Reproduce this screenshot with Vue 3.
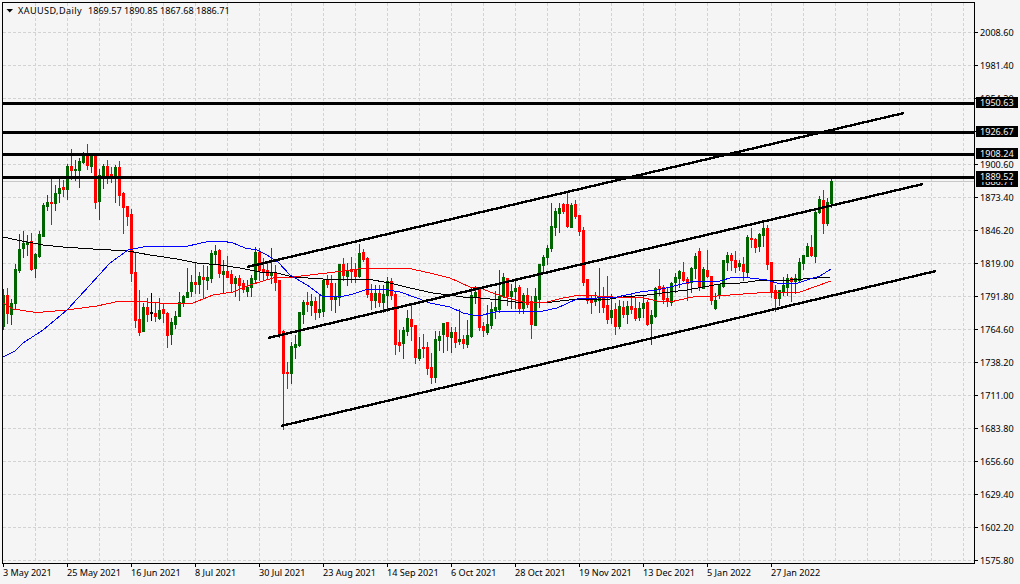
<template>
  <div class="terminal">
    <svg class="chart" width="1020" height="584" viewBox="0 0 1020 584">
      <!-- grid -->
      <g class="grid">
        <line v-for="x in gridX" :key="'gx' + x" :x1="x + 0.5" y1="3" :x2="x + 0.5" y2="563" />
        <line v-for="p in prices" :key="'gy' + p.y" x1="3" :y1="p.y + 0.5" x2="974" :y2="p.y + 0.5" />
      </g>

      <line class="bid" x1="3" y1="181.5" x2="974" y2="181.5" />

      <!-- candles -->
      <g v-for="c in candles" :key="c.col" :class="c.type">
        <rect class="wick" :x="c.col" :y="c.high" width="1" :height="c.low - c.high + 1" />
        <rect class="wick" :x="c.col - 1" :y="c.top" width="3" :height="c.bot - c.top + 1" />
      </g>

      <!-- moving averages -->
      <polyline class="ma ma-black" :points="maBlack" />
      <polyline class="ma ma-red" :points="maRed" />
      <polyline class="ma ma-blue" :points="maBlue" />

      <!-- channel -->
      <line v-for="t in channel" :key="t.x1" class="trend" :x1="t.x1" :y1="t.y1" :x2="t.x2" :y2="t.y2" />

      <!-- horizontal levels -->
      <rect v-for="l in levels" :key="l.label" x="3" :y="l.y - 1" width="971" height="3" />

      <rect class="frame" x="2.5" y="2.5" width="972" height="561" />

      <!-- axes -->
      <g v-for="p in prices" :key="'py' + p.y">
        <rect :x="975" :y="p.y" width="3" height="1" />
        <text class="axis" x="980" :y="p.y + 4">{{ p.label }}</text>
      </g>
      <g v-for="d in dates" :key="d.label">
        <rect :x="d.x" y="564" width="1" height="3" />
        <text class="axis" :x="d.x" y="576">{{ d.label }}</text>
      </g>

      <!-- price tags -->
      <g>
        <rect x="976" y="176" width="42" height="11" />
        <text class="tag" x="980" y="185">1886.71</text>
      </g>
      <g v-for="l in levels" :key="'tag' + l.label">
        <rect x="976" :y="l.y - 6" width="42" height="11" />
        <text class="tag" x="980" :y="l.y + 3">{{ l.label }}</text>
      </g>

      <!-- header -->
      <polygon points="6.5,9 13,9 9.75,12.5" />
      <text class="title" x="18" y="14">XAUUSD,Daily</text>
      <text class="axis" x="88" y="14">1869.57</text>
      <text class="axis" x="124" y="14">1890.85</text>
      <text class="axis" x="160" y="14">1867.68</text>
      <text class="axis" x="196" y="14">1886.71</text>
    </svg>
  </div>
</template>

<script setup>
// wickTop, bodyTop, bodyBottom, wickBottom, colour (one row per day, 4px apart)
const raw = [
  [289,295,326,329,'g'],[288,295,313,323,'r'],[299,303,314,324,'g'],[264,269,303,308,'g'],
  [234,249,270,272,'g'],[231,243,248,257,'g'],[235,242,244,255,'g'],[233,241,269,270,'r'],
  [253,254,268,277,'g'],[231,234,256,257,'g'],[203,205,236,236,'g'],[195,202,206,210,'g'],
  [177,202,203,224,'r'],[185,193,203,210,'g'],[178,188,193,202,'g'],[180,187,189,196,'r'],
  [164,166,189,199,'g'],[149,166,170,179,'r'],[160,169,170,180,'g'],[158,161,170,187,'g'],
  [152,153,162,163,'g'],[144,154,165,169,'r'],[153,155,166,172,'g'],[153,155,202,208,'r'],
  [169,175,201,219,'g'],[164,166,178,188,'g'],[160,166,175,183,'r'],[167,174,178,182,'r'],
  [165,167,178,202,'g'],[161,167,195,205,'r'],[192,193,207,233,'r'],[206,206,216,225,'r'],
  [209,214,273,281,'r'],[252,272,320,327,'r'],[290,319,332,335,'r'],[303,307,331,331,'g'],
  [298,307,314,321,'r'],[293,312,313,320,'k'],[303,313,316,321,'r'],[298,310,318,319,'g'],
  [304,309,313,322,'r'],[312,313,335,347,'r'],[318,322,334,344,'g'],[311,316,324,328,'g'],
  [292,302,316,316,'g'],[295,296,303,306,'g'],[268,292,297,297,'g'],[275,282,291,296,'g'],
  [263,282,284,293,'r'],[272,276,284,293,'g'],[265,277,279,298,'r'],[266,277,280,289,'g'],
  [250,253,278,282,'g'],[245,251,254,263,'g'],[249,250,273,277,'r'],[260,271,274,293,'g'],
  [256,271,277,277,'r'],[270,274,283,292,'r'],[276,278,283,296,'g'],[275,278,285,300,'r'],
  [280,283,289,292,'r'],[280,287,291,296,'g'],[275,278,287,296,'g'],[247,252,279,283,'g'],
  [248,252,270,280,'r'],[258,269,271,280,'r'],[263,270,275,279,'r'],[248,272,275,283,'g'],
  [265,272,282,290,'r'],[280,280,335,337,'r'],[330,331,373,429,'r'],[362,372,373,388,'r'],
  [342,346,373,383,'g'],[335,344,347,358,'g'],[312,312,345,346,'g'],[300,302,314,323,'g'],
  [292,302,304,311,'r'],[294,301,305,315,'g'],[297,301,312,319,'r'],[295,309,312,317,'g'],
  [280,280,311,316,'g'],[275,280,284,287,'r'],[275,283,299,310,'r'],[283,296,299,312,'g'],
  [264,264,297,305,'g'],[258,264,275,280,'r'],[263,270,276,285,'g'],[257,269,271,282,'r'],
  [263,269,276,282,'r'],[244,253,276,277,'g'],[249,252,259,261,'r'],[257,258,294,297,'r'],
  [284,293,300,309,'r'],[285,293,300,307,'g'],[285,293,302,306,'r'],[285,294,302,312,'g'],
  [277,281,295,311,'g'],[278,281,295,299,'r'],[292,294,344,354,'r'],[330,342,345,351,'r'],
  [327,330,343,358,'g'],[310,318,331,335,'g'],[303,319,326,340,'r'],[325,325,357,363,'r'],
  [337,349,358,360,'g'],[334,347,348,357,'r'],[342,347,368,374,'r'],[353,367,377,383,'r'],
  [331,339,377,382,'g'],[331,336,340,350,'g'],[323,323,334,352,'g'],[322,322,336,350,'r'],
  [327,332,337,352,'g'],[327,332,342,347,'r'],[309,339,341,344,'g'],[335,339,343,348,'r'],
  [320,335,344,347,'g'],[288,295,336,337,'g'],[286,292,296,303,'g'],[287,289,327,330,'r'],
  [322,326,330,336,'r'],[305,324,332,334,'g'],[302,309,325,328,'g'],[291,307,310,318,'g'],
  [270,296,309,312,'g'],[273,277,296,297,'g'],[278,278,296,305,'r'],[284,291,296,308,'g'],
  [278,288,291,308,'g'],[285,287,308,313,'r'],[293,295,308,313,'g'],[288,295,304,307,'r'],
  [296,301,324,338,'r'],[288,296,325,325,'g'],[264,264,299,307,'g'],[255,257,265,272,'g'],
  [245,248,257,264,'g'],[203,226,248,251,'g'],[208,211,227,235,'g'],[203,208,213,232,'g'],
  [203,204,211,213,'r'],[192,204,226,227,'r'],[203,205,227,227,'g'],[200,204,216,218,'r'],
  [215,215,231,235,'r'],[227,230,282,285,'r'],[279,279,300,303,'r'],[295,300,302,313,'r'],
  [292,299,301,305,'g'],[268,296,300,312,'g'],[287,296,307,312,'r'],[276,305,319,323,'r'],
  [294,310,317,323,'g'],[303,309,326,334,'r'],[300,306,326,328,'g'],[301,307,314,317,'r'],
  [301,306,314,323,'g'],[293,306,309,313,'r'],[297,308,318,320,'r'],[302,308,317,320,'g'],
  [295,303,308,317,'g'],[300,302,324,325,'r'],[310,315,323,344,'g'],[287,288,316,317,'g'],
  [269,286,289,295,'r'],[285,287,299,303,'r'],[287,298,301,306,'r'],[282,283,302,305,'g'],
  [273,277,282,292,'g'],[270,271,278,287,'g'],[262,272,280,281,'r'],[277,279,283,300,'r'],
  [267,268,282,292,'g'],[253,256,268,278,'g'],[248,251,286,290,'r'],[267,269,288,288,'g'],
  [250,270,276,277,'r'],[276,276,300,304,'r'],[293,300,308,309,'g'],[284,284,294,298,'g'],
  [260,260,286,287,'g'],[252,255,262,270,'g'],[253,255,260,270,'r'],[251,260,267,272,'r'],
  [260,263,266,270,'g'],[257,264,271,280,'r'],[235,237,272,276,'g'],[228,238,239,247,'r'],
  [238,239,247,252,'r'],[233,234,246,251,'g'],[222,228,235,246,'g'],[225,228,264,269,'r'],
  [262,262,292,297,'r'],[285,290,298,311,'r'],[290,290,298,305,'g'],[277,285,291,295,'g'],
  [274,278,287,295,'g'],[277,278,281,301,'r'],[274,278,281,293,'g'],[258,262,280,281,'g'],
  [255,255,263,269,'g'],[243,246,256,256,'g'],[235,247,255,256,'r'],[208,212,256,262,'g'],
  [196,199,212,213,'g'],[190,200,223,233,'r'],[198,202,223,225,'g'],[176,181,203,207,'g']
]

const candles = raw.map((r, i) => ({
  col: 3 + i * 4, high: r[0], top: r[1], bot: r[2], low: r[3], type: 'c-' + r[4]
}))

const gridX = Array.from({ length: 30 }, (_, i) => 35 + i * 32)

const priceLabels = ['2008.60','1981.40','1954.20','1927.80','1900.60','1873.40','1846.20','1819.00','1791.80',
  '1764.60','1738.20','1711.00','1683.80','1656.60','1629.40','1602.20','1575.80']
const prices = priceLabels.map((label, i) => ({ label, y: 32 + i * 33 }))

const dates = ['3 May 2021','25 May 2021','16 Jun 2021','8 Jul 2021','30 Jul 2021','23 Aug 2021','14 Sep 2021',
  '6 Oct 2021','28 Oct 2021','19 Nov 2021','13 Dec 2021','5 Jan 2022','27 Jan 2022']
  .map((label, i) => ({ label, x: 3 + i * 64 }))

const levels = [
  { label: '1950.63', y: 103 },
  { label: '1926.67', y: 132 },
  { label: '1908.24', y: 154 },
  { label: '1889.52', y: 177 }
]

const channel = [
  { x1: 247, y1: 267, x2: 904, y2: 113 },
  { x1: 268, y1: 338, x2: 923, y2: 184 },
  { x1: 281, y1: 426, x2: 936, y2: 271 }
]

const maBlue = '3,357 15,351 23,343 43,330 67,310 90,285 110,263 128,250 143,247 160,246 188,246 197,244 210,241 222,241 233,243 245,248 257,250 267,255 278,262 290,275 307,285 322,296 340,297 353,294 365,290 383,289 400,292 417,298 430,303 450,307 463,313 473,315 483,315 490,313 500,311 517,311 543,311 557,308 577,299 597,298 617,297 640,292 657,290 670,287 690,282 720,281 733,277 750,278 767,280 780,284 798,283 810,279 820,276 831,269'
const maBlack = '3,237 17,240 43,245 63,247 93,249 128,251 150,255 177,259 197,263 220,265 240,268 260,272 277,273 293,277 323,279 367,279 390,283 410,288 433,293 463,297 480,298 500,300 523,303 552,302 577,299 603,300 623,297 647,295 670,292 687,290 703,287 720,284 740,283 763,280 790,280 830,277'
const maRed = '3,303 13,309 33,312 43,312 67,310 97,306 120,301 147,302 170,304 193,303 213,295 233,292 250,285 273,278 293,277 327,273 350,270 367,268 407,268 430,273 450,278 470,287 480,288 493,293 507,298 523,302 543,303 563,298 580,295 613,297 640,297 657,301 670,302 693,297 717,296 770,292 800,292 817,286 831,281'
</script>

<style scoped>
.terminal { width: 1020px; height: 584px; background: #f5f5f5; overflow: hidden; }
.chart { display: block; }
.grid line { stroke: #d3d3d3; stroke-width: 1; stroke-dasharray: 3 2; shape-rendering: crispEdges; }
.bid { stroke: #c8c8c8; stroke-width: 1; shape-rendering: crispEdges; }
.wick { shape-rendering: crispEdges; }
.c-g { fill: #006400; }
.c-r { fill: #ff0000; }
.c-k { fill: #000; }
.ma { fill: none; stroke-width: 1; shape-rendering: crispEdges; }
.ma-black { stroke: #000; }
.ma-red { stroke: #ff0000; }
.ma-blue { stroke: #0000ff; }
.trend { stroke: #000; stroke-width: 2.4; shape-rendering: crispEdges; }
.frame { fill: none; stroke: #000; stroke-width: 1; shape-rendering: crispEdges; }
.axis, .title, .tag { font-family: "Noto Sans", "Liberation Sans", sans-serif; font-size: 9.1px; fill: #000; }
.title { letter-spacing: 0.4px; }
.tag { fill: #f5f5f5; }
</style>

<style>
html, body { background: #f5f5f5; }
</style>
